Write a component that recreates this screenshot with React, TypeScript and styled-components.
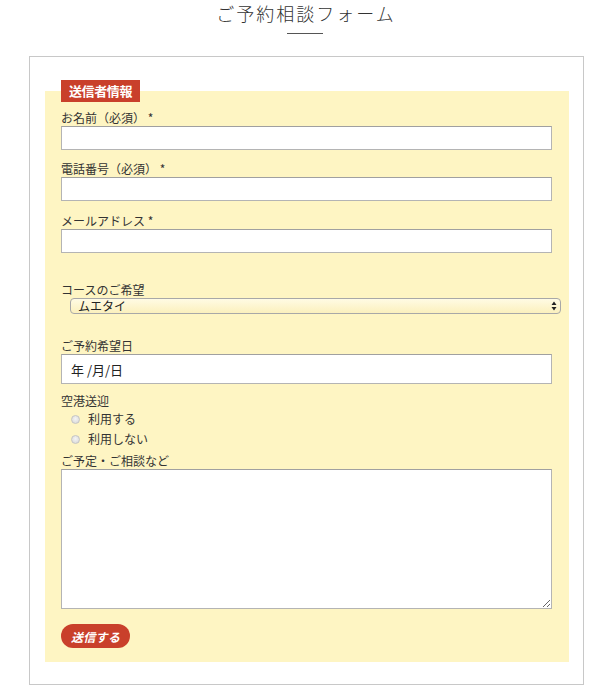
import styled, { createGlobalStyle } from 'styled-components';

const GlobalStyle = createGlobalStyle`
  html, body {
    margin: 0;
    padding: 0;
    background: #fff;
  }
  body {
    font-family: "Noto Sans CJK JP", "Noto Sans", sans-serif;
    color: #333;
  }
  * {
    box-sizing: border-box;
  }
`;

const Header = styled.header`
  display: flex;
  flex-direction: column;
  align-items: center;
`;

const Title = styled.h1`
  margin: 0;
  font-size: 18px;
  line-height: 26px;
  height: 30px;
  font-weight: 300;
  letter-spacing: 2px;
  padding-left: 2px;
  color: #333;
`;

const TitleRule = styled.div`
  width: 36px;
  height: 1px;
  margin-top: 3px;
  background: #555;
`;

const FormBox = styled.form`
  margin: 22px 0 0 29px;
  width: 555px;
  border: 1px solid #c8c8c8;
  padding: 34px 14px 22px 15px;
`;

const Panel = styled.div`
  position: relative;
  background: #fef5c3;
  padding: 18px 16px 14px 16px;
  display: flex;
  flex-direction: column;
`;

const Legend = styled.div`
  position: absolute;
  top: -11px;
  left: 16px;
  height: 22px;
  padding: 0 8px;
  background: #c9402b;
  color: #fff;
  font-size: 13px;
  font-weight: bold;
  line-height: 22px;
  letter-spacing: -0.4px;
`;

const Field = styled.div<{ $top?: number }>`
  display: flex;
  flex-direction: column;
  margin-top: ${(p) => p.$top ?? 0}px;
`;

const Label = styled.label`
  display: block;
  font-size: 12px;
  line-height: 17px;
  height: 17px;
  color: #333;
`;

const TextInput = styled.input<{ $h?: number }>`
  display: block;
  width: 491px;
  height: ${(p) => p.$h ?? 24}px;
  margin: 0;
  border: 1px solid #b4b4b4;
  border-top-color: #a0a0a0;
  background: #fff;
  font-family: inherit;
  font-size: 13px;
  color: #222;
  padding: 0 9px;
  outline: none;
`;

const SelectWrap = styled.div`
  position: relative;
  width: 491px;
  height: 16px;
  margin-left: 9px;
`;

const Select = styled.select`
  appearance: none;
  -webkit-appearance: none;
  display: block;
  margin: 0;
  width: 100%;
  height: 16px;
  border: 1px solid #a8a8a8;
  border-radius: 4px;
  background: linear-gradient(#fffbe4, #fbf0bd);
  font-family: inherit;
  font-size: 12px;
  line-height: 14px;
  color: #222;
  padding: 0 0 0 7px;
  outline: none;
`;

const SelectArrows = styled.svg`
  position: absolute;
  right: 4px;
  top: 3px;
  pointer-events: none;
`;

const RadioRow = styled.label`
  display: flex;
  align-items: center;
  height: 20px;
  padding-left: 10px;
  gap: 8px;
  font-size: 12px;
  line-height: 20px;
  color: #333;
`;

const Radio = styled.input`
  appearance: none;
  -webkit-appearance: none;
  margin: 0;
  width: 9px;
  height: 9px;
  border-radius: 50%;
  border: 1px solid #c4c4c4;
  background: radial-gradient(circle at 50% 40%, #f4f4f4 0%, #d6d6d6 100%);
`;

const TextArea = styled.textarea`
  display: block;
  margin: 0;
  width: 491px;
  height: 140px;
  border: 1px solid #b4b4b4;
  border-top-color: #a0a0a0;
  background: #fff;
  font-family: inherit;
  font-size: 13px;
  outline: none;
  resize: both;
`;

const SubmitButton = styled.button`
  align-self: flex-start;
  margin-top: 15px;
  height: 24px;
  padding: 0 10px;
  border: none;
  border-radius: 12px;
  background: #c9402b;
  color: #fff;
  font-family: inherit;
  font-size: 12px;
  font-weight: bold;
  font-style: italic;
  letter-spacing: 0.3px;
  cursor: pointer;
`;

export default function App() {
  return (
    <>
      <GlobalStyle />
      <Header>
        <Title>ご予約相談フォーム</Title>
        <TitleRule />
      </Header>
      <FormBox onSubmit={(e) => e.preventDefault()}>
        <Panel>
          <Legend>送信者情報</Legend>
          <Field>
            <Label>お名前（必須） *</Label>
            <TextInput type="text" />
          </Field>
          <Field $top={10}>
            <Label>電話番号（必須） *</Label>
            <TextInput type="tel" />
          </Field>
          <Field $top={11}>
            <Label>メールアドレス *</Label>
            <TextInput type="email" />
          </Field>
          <Field $top={28}>
            <Label>コースのご希望</Label>
            <SelectWrap>
              <Select defaultValue="muaythai">
                <option value="muaythai">ムエタイ</option>
              </Select>
              <SelectArrows width="6" height="10" viewBox="0 0 6 10">
                <path d="M3 0.5 L5.5 4 H0.5 Z M3 9.5 L5.5 6 H0.5 Z" fill="#222" />
              </SelectArrows>
            </SelectWrap>
          </Field>
          <Field $top={23}>
            <Label>ご予約希望日</Label>
            <TextInput type="text" $h={30} defaultValue="年 /月/日" readOnly />
          </Field>
          <Field $top={8}>
            <Label>空港送迎</Label>
            <RadioRow>
              <Radio type="radio" name="pickup" />
              利用する
            </RadioRow>
            <RadioRow>
              <Radio type="radio" name="pickup" />
              利用しない
            </RadioRow>
          </Field>
          <Field $top={3}>
            <Label>ご予定・ご相談など</Label>
            <TextArea />
          </Field>
          <SubmitButton type="submit">送信する</SubmitButton>
        </Panel>
      </FormBox>
    </>
  );
}
